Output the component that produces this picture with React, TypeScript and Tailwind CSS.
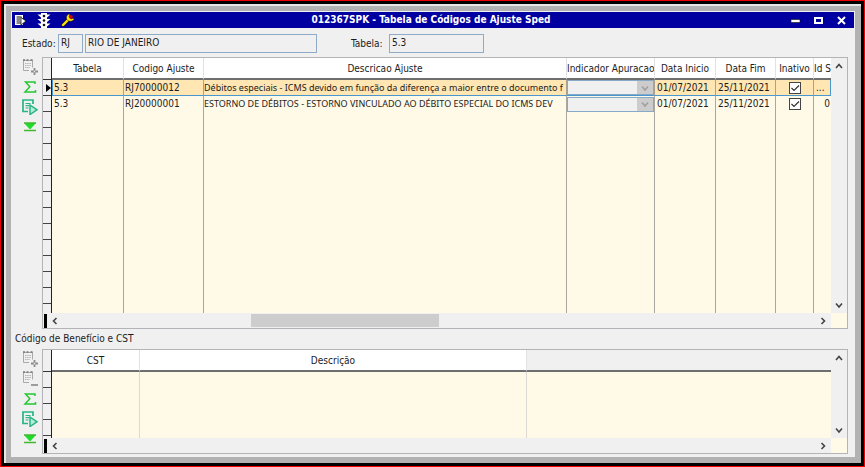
import { useState } from "react";
import type { ReactNode } from "react";

interface Ajuste {
  tabela: string;
  codigo: string;
  descricao: string;
  inicio: string;
  fim: string;
  inativo: boolean;
  idSped: string;
}

const AJUSTES: Ajuste[] = [
  { tabela: "5.3", codigo: "RJ70000012", descricao: "Débitos especiais - ICMS devido em função da diferença a maior entre o documento f", inicio: "01/07/2021", fim: "25/11/2021", inativo: true, idSped: "..." },
  { tabela: "5.3", codigo: "RJ20000001", descricao: "ESTORNO DE DÉBITOS - ESTORNO VINCULADO AO DÉBITO ESPECIAL DO ICMS DEV", inicio: "01/07/2021", fim: "25/11/2021", inativo: true, idSped: "0" },
];

function MenuIcon() {
  return (
    <svg width="12" height="12" viewBox="0 0 12 12">
      <path d="M0 1h8v10H0z" fill="#fff" />
      <path d="M1.500 3h5M1.500 5h4M1.500 7h4M1.500 9h5" stroke="#111" />
      <path d="M6 3.500l5 3.500-5 4z" fill="#fff" stroke="#111" strokeWidth=".8" />
    </svg>
  );
}

function TrafficIcon() {
  return (
    <svg width="14" height="15" viewBox="0 0 14 15">
      <path d="M4 0h6v1.500h3.500L10 4.500V6h3.500L10 9v1.500h3.500L10 13.500V15H4v-1.500L.5 10.500H4V9L.5 6H4V4.500L.5 1.500H4z" fill="#fff" />
      <circle cx="7" cy="3" r="1.300" fill="#111" />
      <circle cx="7" cy="7.500" r="1.300" fill="#111" />
      <circle cx="7" cy="12" r="1.300" fill="#111" />
    </svg>
  );
}

function WrenchIcon() {
  return (
    <svg width="14" height="14" viewBox="0 0 14 14">
      <path d="M2 12L7 7" stroke="#111" strokeWidth="3.600" strokeLinecap="round" />
      <path d="M2 12L7 7" stroke="#ffe800" strokeWidth="2.400" strokeLinecap="round" />
      <path d="M9 1C6.500 1 5 3 5.500 5.500 6.500 9 11 9 13 6.500L12.500 5 10 6 8 4z" fill="#ffe800" stroke="#111" strokeWidth=".5" />
      <circle cx="9.800" cy="3.800" r="1.900" fill="#d80000" />
    </svg>
  );
}

function SheetIcon({ minus }: { minus?: boolean }) {
  return (
    <svg width="16" height="16" viewBox="0 0 16 16" fill="none">
      <path d="M1 1.500h9.500M1.500 1v10.500H7M10.500 1v7.500" stroke="#a9a9a9" />
      <path d="M1 1h2M4.500 1h2M8.500 1h2" stroke="#777" strokeWidth="1.500" />
      <path d="M3 4.500h6M3 6.500h6M3 8.500h5" stroke="#b5b5b5" strokeDasharray="1.500 .7" />
      {minus ? (
        <path d="M9 14h7" stroke="#888" strokeWidth="1.600" />
      ) : (
        <path d="M12.500 9v7M9 12.500h7" stroke="#8c8c8c" strokeWidth="1.800" strokeDasharray="2.800 1.400" />
      )}
    </svg>
  );
}

function SumIcon() {
  return (
    <svg width="14" height="12" viewBox="0 0 14 12">
      <path d="M12 3V1H2.500l4.300 4.800L2 11h10.500V9" fill="none" stroke="#25c832" strokeWidth="1.500" />
    </svg>
  );
}

function RunIcon() {
  return (
    <svg width="16" height="16" viewBox="0 0 16 16" fill="none">
      <path d="M6 12.500H1V1h10v4" stroke="#27b586" strokeWidth="1.700" />
      <path d="M3.500 4.500h5M3.500 6.700h3.500M3.500 9h3" stroke="#27b586" strokeWidth="1.200" />
      <path d="M8 6l7 4.800-7 4.700z" fill="#b9ecd4" stroke="#27b586" strokeWidth="1.500" />
    </svg>
  );
}

function LastIcon() {
  return (
    <svg width="14" height="10" viewBox="0 0 14 10">
      <path d="M1 1h12L7.500 7h-1z" fill="#1fdb2c" />
      <path d="M1 1h12M1 8.500h12" stroke="#43b82c" strokeWidth="1.500" />
    </svg>
  );
}

function Chevron({ dir, color = "#444" }: { dir: "up" | "down" | "left" | "right"; color?: string }) {
  const paths = {
    up: "M1 6l3-3.500L7 6",
    down: "M1 2.500L4 6l3-3.500",
    left: "M5.500 1L2.500 4l3 3",
    right: "M2.500 1l3 3-3 3",
  };
  return (
    <svg width="8" height="8" viewBox="0 0 8 8">
      <path d={paths[dir]} fill="none" stroke={color} strokeWidth="1.600" />
    </svg>
  );
}

function Tool({ label, children }: { label: string; children: ReactNode }) {
  return (
    <button type="button" aria-label={label} className="flex h-5 w-6 items-center justify-center">
      {children}
    </button>
  );
}

function Toolbar({ canRemove }: { canRemove?: boolean }) {
  return (
    <div className="flex w-6 shrink-0 flex-col">
      <Tool label="Incluir"><SheetIcon /></Tool>
      {canRemove && <Tool label="Excluir"><SheetIcon minus /></Tool>}
      <Tool label="Somar"><SumIcon /></Tool>
      <Tool label="Executar"><RunIcon /></Tool>
      <Tool label="Último"><LastIcon /></Tool>
    </div>
  );
}

function Gutter({ rows, current }: { rows: number; current?: number }) {
  return (
    <div className="flex w-[9px] shrink-0 flex-col border-r border-[#222] bg-[#f0f0f0]">
      <div className="h-[22px] border-b border-[#333]" />
      {Array.from({ length: rows }, (_, i) => (
        <div key={i} className="flex h-4 items-center justify-end border-b border-[#444]">
          {i === current && (
            <svg width="5" height="8" viewBox="0 0 5 8"><path d="M0 0l5 4-5 4z" fill="#000" /></svg>
          )}
        </div>
      ))}
    </div>
  );
}

function Grid({ rows, current, thumb, children }: { rows: number; current?: number; thumb?: boolean; children: ReactNode }) {
  return (
    <div className="min-w-0 flex-1 border border-[#b4b4b8] bg-[#fff9e8]">
      <div className="flex">
        <Gutter rows={rows} current={current} />
        <div className="min-w-0 flex-1 overflow-hidden">{children}</div>
        <div className="flex w-4 shrink-0 flex-col items-center justify-between bg-[#f0f0f0]">
          <button type="button" aria-label="Rolar para cima" className="flex h-4 w-4 items-center justify-center"><Chevron dir="up" /></button>
          <button type="button" aria-label="Rolar para baixo" className="flex h-4 w-4 items-center justify-center"><Chevron dir="down" /></button>
        </div>
      </div>
      <div className="flex h-[15px]">
        <div className="flex flex-1 items-center bg-[#f0f0f0] pl-px">
          <div className="h-[14px] w-[3px] bg-black" />
          <button type="button" aria-label="Rolar para a esquerda" className="flex h-[14px] w-4 items-center justify-center"><Chevron dir="left" /></button>
          <div className="flex h-[13px] flex-1">
            {thumb && (
              <>
                <div className="w-1/4" />
                <div className="w-1/4 bg-[#cdcdcd]" />
              </>
            )}
          </div>
          <button type="button" aria-label="Rolar para a direita" className="flex h-[14px] w-4 items-center justify-center"><Chevron dir="right" /></button>
        </div>
        <div className="w-4 shrink-0" />
      </div>
    </div>
  );
}

function Th({ children, last }: { children?: ReactNode; last?: boolean }) {
  return (
    <th className={`h-[22px] overflow-hidden border-b-2 border-[#6e6e6e] bg-white p-0 pt-0.5 font-normal whitespace-nowrap ${last ? "" : "border-r border-r-[#e2e2e2]"}`}>
      {children}
    </th>
  );
}

function AjusteRow({ row, selected }: { row: Ajuste; selected: boolean }) {
  const [inativo, setInativo] = useState(row.inativo);
  const cell = selected
    ? "h-4 overflow-hidden border-r border-b border-r-[#a9a293] border-b-[#4a97cf] bg-[#ffe6b3] p-0 leading-[14px] whitespace-nowrap"
    : "h-4 overflow-hidden border-r border-[#a9a79f] p-0 leading-[14px] whitespace-nowrap";
  return (
    <tr>
      <td className={`${cell} ${selected ? "border-l border-l-[#4a97cf] pl-px" : "pl-0.5"}`}>{row.tabela}</td>
      <td className={`${cell} pl-px`}>{row.codigo}</td>
      <td className={`${cell} font-['Noto_Sans',sans-serif] text-[9px]`}>{row.descricao}</td>
      <td className={cell}>
        <div className="relative h-[15px]">
          <select disabled aria-label="Indicador Apuracao" className="block h-full w-full appearance-none border border-[#88a8c8] bg-[#f0f0f0] opacity-100">
            <option></option>
          </select>
          <span className="pointer-events-none absolute inset-y-px right-px flex w-4 items-center justify-center bg-[#cccccc]">
            <Chevron dir="down" color="#a0a0a0" />
          </span>
        </div>
      </td>
      <td className={`${cell} pl-0.5`}>{row.inicio}</td>
      <td className={`${cell} pl-0.5`}>{row.fim}</td>
      <td className={cell}>
        <div className="relative mx-auto h-3 w-3">
          <input
            type="checkbox"
            aria-label="Inativo"
            checked={inativo}
            onChange={(e) => setInativo(e.target.checked)}
            className="block h-3 w-3 appearance-none border border-[#444] bg-white"
          />
          {inativo && (
            <svg className="pointer-events-none absolute inset-0" width="12" height="12" viewBox="0 0 12 12">
              <path d="M2.500 6L5 8.500 10 3.500" fill="none" stroke="#333" strokeWidth="1.200" />
            </svg>
          )}
        </div>
      </td>
      <td className={`overflow-hidden p-0 leading-[14px] whitespace-nowrap ${selected ? "border-r border-b border-[#4a97cf] bg-[#ffe6b3]" : "pr-px text-right"}`}>
        {selected ? <button type="button" aria-label="Abrir Id Sped" className="block pl-0.5">{row.idSped}</button> : row.idSped}
      </td>
    </tr>
  );
}

function AjustesTable() {
  return (
    <table className="w-full table-fixed border-separate border-spacing-0">
      <colgroup>
        <col className="w-[72px]" />
        <col className="w-20" />
        <col />
        <col className="w-[88px]" />
        <col className="w-[61px]" />
        <col className="w-[60px]" />
        <col className="w-[38px]" />
        <col className="w-[17px]" />
      </colgroup>
      <thead>
        <tr>
          <Th>Tabela</Th>
          <Th>Codigo Ajuste</Th>
          <Th>Descricao Ajuste</Th>
          <Th>Indicador Apuracao</Th>
          <Th>Data Inicio</Th>
          <Th>Data Fim</Th>
          <Th>Inativo</Th>
          <Th last>Id S</Th>
        </tr>
      </thead>
      <tbody>
        {AJUSTES.map((row, i) => <AjusteRow key={row.codigo} row={row} selected={i === 0} />)}
        <tr>
          {Array.from({ length: 7 }, (_, i) => <td key={i} className="h-[201px] border-r border-[#a9a79f] p-0" />)}
          <td className="p-0" />
        </tr>
      </tbody>
    </table>
  );
}

function CstTable() {
  return (
    <table className="w-full table-fixed border-separate border-spacing-0">
      <colgroup>
        <col className="w-[88px]" />
        <col className="w-[387px]" />
        <col />
      </colgroup>
      <thead>
        <tr>
          <Th>CST</Th>
          <Th>Descrição</Th>
          <td className="border-b-2 border-[#6e6e6e] bg-[#f0f0f0] p-0" />
        </tr>
      </thead>
      <tbody>
        <tr>
          <td className="h-[66px] border-r border-[#dcdad2] p-0" />
          <td className="border-r border-[#dcdad2] p-0" />
          <td className="p-0" />
        </tr>
      </tbody>
    </table>
  );
}

const field = "h-[19px] border border-[#8fabc8] bg-[#f0f0f0] px-0.5 pb-0.5";

export default function App() {
  return (
    <div className="min-h-screen border border-[#f00000] bg-black p-[3px] font-['DejaVu_Sans_Condensed','Noto_Sans',sans-serif] text-[10px] leading-3 text-[#1c1c1c]">
      <div className="border-t-2 border-l-2 border-[#e8e8e8] bg-[#b2b2b2] pt-[5px] pr-1.5 pb-1.5 pl-[5px]">
        <main className="bg-[#f0f0f0] p-px">
          <header className="flex h-4 items-center bg-[#0000a0] px-[3px] text-white">
            <div className="flex flex-1 items-center gap-2.5">
              <MenuIcon />
              <TrafficIcon />
              <WrenchIcon />
            </div>
            <h1 className="text-[10px] font-bold">012367SPK - Tabela de Códigos de Ajuste Sped</h1>
            <div className="flex flex-1 items-center justify-end gap-3 pr-1">
              <button type="button" aria-label="Minimizar"><svg width="11" height="11" viewBox="0 0 11 11"><path d="M1 4.500h9v3H1z" fill="#fff" stroke="#111" strokeWidth=".6" /></svg></button>
              <button type="button" aria-label="Maximizar"><svg width="11" height="11" viewBox="0 0 11 11"><path d="M2 3h7v5H2z" fill="none" stroke="#fff" strokeWidth="2" /></svg></button>
              <button type="button" aria-label="Fechar"><svg width="11" height="11" viewBox="0 0 11 11"><path d="M2 2l7 7M9 2L2 9" stroke="#fff" strokeWidth="2" /></svg></button>
            </div>
          </header>

          <div className="flex items-center px-2.5 pt-1.5">
            <label htmlFor="uf" className="w-9">Estado:</label>
            <input id="uf" readOnly value="RJ" className={`${field} w-[25px]`} />
            <input aria-label="Nome do estado" readOnly value="RIO DE JANEIRO" className={`${field} ml-0.5 w-[232px]`} />
            <label htmlFor="tabela" className="ml-[34px] w-[38px]">Tabela:</label>
            <input id="tabela" readOnly value="5.3" className={`${field} w-[95px]`} />
          </div>

          <section className="flex px-1.5 pt-1">
            <Toolbar />
            <Grid rows={14} current={0} thumb><AjustesTable /></Grid>
          </section>

          <h2 className="flex h-5 items-center px-[3px] text-[10px]">Código de Benefício e CST</h2>

          <section className="flex px-1.5 pb-0.5">
            <Toolbar canRemove />
            <Grid rows={4}><CstTable /></Grid>
          </section>
        </main>
      </div>
    </div>
  );
}
